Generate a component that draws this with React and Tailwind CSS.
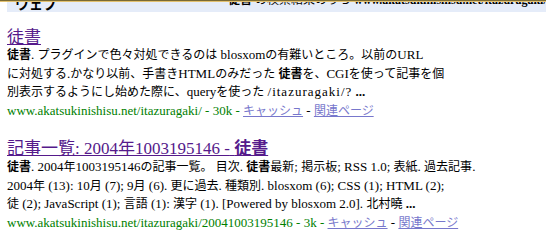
const CJK = /([\u3000-\u30ff\u3400-\u9fff\uff00-\uffef]+)/;

function T({ s, c = "text-[12px]" }) {
  return s.split(CJK).map((p, i) =>
    i % 2 ? (
      <span key={i} className={"font-['Noto_Sans_CJK_JP'] " + c}>
        {p}
      </span>
    ) : (
      p
    )
  );
}

function Line({ children, className = "" }) {
  return <div className={"h-[18.5px] leading-[18.5px] whitespace-nowrap " + className}>{children}</div>;
}

function Meta({ url, size }) {
  return (
    <Line>
      <span className="text-[#008000]">
        {url} - {size} -{" "}
      </span>
      <a className="text-[#7777cc] underline">
        <T s="キャッシュ" />
      </a>{" "}
      - {" "}
      <a className="text-[#7777cc] underline">
        <T s="関連ページ" />
      </a>
    </Line>
  );
}

export default function App() {
  return (
    <div className="w-[546px] h-[250px] overflow-hidden bg-white font-['Liberation_Serif','Noto_Sans_CJK_JP',serif] text-[13px] text-black">
      <div className="h-[1px] bg-[#7a6a34]" />
      <div className="h-[1px] bg-[#e2c170]" />
      <div className="flex h-[248px]">
        <div className="w-[2px] bg-black" />
        <div className="flex-1 pl-[7px]">
          <div className="flex h-[10px] overflow-hidden bg-[#e5ecf9]">
            <div className="w-[221px] pl-[8px] -mt-[6px] text-[14px] leading-[14px] font-bold font-['Noto_Sans_CJK_JP']">
              ウェブ
            </div>
            <div className="-mt-[9px] text-[12px] leading-[12px] whitespace-nowrap">
              <b>
                <T s="徒書" />
              </b>{" "}
              <T s="の検索結果のうち" />{" "}
              <b>www.akatsukinishisu.net/itazuragaki/</b> <T s="からの" />
            </div>
          </div>

          <div className="mt-[15px]">
            <a className="block h-[18px] leading-[18px] text-[17px] text-[#551a8b] underline">
              <T s="徒書" c="text-[17px]" />
            </a>
            <Line>
              <b>
                <T s="徒書" />
              </b>
              . <T s="プラグインで色々対処できるのは" /> blosxom
              <T s="の有難いところ。以前の" />
              URL
            </Line>
            <Line>
              <T s="に対処する" />.
              <T s="かなり以前、手書き" />
              HTML
              <T s="のみだった" />{" "}
              <b>
                <T s="徒書" />
              </b>
              <T s="を、" />
              CGI
              <T s="を使って記事を個" />
            </Line>
            <Line>
              <T s="別表示するようにし始めた際に、" />
              query
              <T s="を使った" /> <span className="tracking-[1px]">/itazuragaki/?</span> <b>...</b>
            </Line>
            <Meta url="www.akatsukinishisu.net/itazuragaki/" size="30k" />
          </div>

          <div className="mt-[17px]">
            <a className="block h-[21px] leading-[21px] text-[17px] text-[#551a8b] underline whitespace-nowrap">
              <T s="記事一覧" c="text-[17px]" />: 2004
              <T s="年" c="text-[17px]" />
              1003195146 -{" "}
              <b>
                <T s="徒書" c="text-[17px]" />
              </b>
            </a>
            <Line>
              <b>
                <T s="徒書" />
              </b>
              . 2004
              <T s="年" />
              1003195146
              <T s="の記事一覧。" /> <T s="目次" />.{" "}
              <b>
                <T s="徒書" />
              </b>
              <T s="最新" />; <T s="掲示板" />; RSS 1.0; <T s="表紙" />. <T s="過去記事" />.
            </Line>
            <Line>
              2004
              <T s="年" /> (13): 10
              <T s="月" /> (7); 9<T s="月" /> (6). <T s="更に過去" />. <T s="種類別" />. blosxom (6); CSS
              (1); HTML (2);
            </Line>
            <Line>
              <T s="徒" /> (2); JavaScript (1); <T s="言語" /> (1): <T s="漢字" /> (1). [Powered by blosxom
              2.0]. <T s="北村曉" /> <b>...</b>
            </Line>
            <Meta url="www.akatsukinishisu.net/itazuragaki/20041003195146" size="3k" />
          </div>
        </div>
      </div>
    </div>
  );
}
